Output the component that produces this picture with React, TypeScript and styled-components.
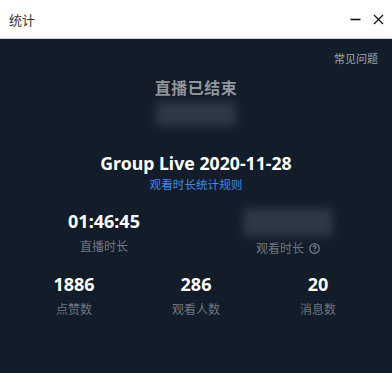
import React from "react";
import styled, { createGlobalStyle } from "styled-components";

const GlobalStyle = createGlobalStyle`
  html, body {
    margin: 0;
    padding: 0;
    width: 392px;
    height: 373px;
    overflow: hidden;
    font-family: "Noto Sans", "Noto Sans CJK SC", sans-serif;
  }
`;

type StatType = { value: string; label: string };

const bottomStats: StatType[] = [
  { value: "1886", label: "点赞数" },
  { value: "286", label: "观看人数" },
  { value: "20", label: "消息数" },
];

export default function App() {
  return (
    <S.Window>
      <GlobalStyle />
      <S.TitleBar>
        <S.Title>统计</S.Title>
        <S.WindowButtons>
          <S.WinButton aria-label="minimize">
            <svg width="11" height="11" viewBox="0 0 11 11">
              <path d="M0.5 5.5h10" stroke="#111" strokeWidth="1.6" />
            </svg>
          </S.WinButton>
          <S.WinButton aria-label="close">
            <svg width="11" height="11" viewBox="0 0 11 11">
              <path d="M1 1l9 9M10 1l-9 9" stroke="#111" strokeWidth="1.3" />
            </svg>
          </S.WinButton>
        </S.WindowButtons>
      </S.TitleBar>
      <S.Body>
        <S.HelpRow>
          <S.HelpLink>常见问题</S.HelpLink>
        </S.HelpRow>
        <S.EndedTitle>直播已结束</S.EndedTitle>
        <S.Blur width={80} height={24} offset={3} />
        <S.LiveName>Group Live 2020-11-28</S.LiveName>
        <S.RuleLink>观看时长统计规则</S.RuleLink>
        <S.TopStats>
          <S.Stat>
            <S.StatValue>01:46:45</S.StatValue>
            <S.StatLabel>直播时长</S.StatLabel>
          </S.Stat>
          <S.Stat>
            <S.Blur width={90} height={28} offset={0} />
            <S.StatLabel>
              观看时长
              <S.InfoIcon width="11" height="11" viewBox="0 0 12 12">
                <circle cx="6" cy="6" r="5.2" fill="none" stroke="#8c939b" strokeWidth="1.1" />
                <path
                  d="M4.4 4.7c0-1 .7-1.6 1.6-1.6s1.6.6 1.6 1.4c0 .9-1.1 1.1-1.4 1.8v.6"
                  fill="none"
                  stroke="#8c939b"
                  strokeWidth="1.1"
                />
                <circle cx="6.2" cy="8.7" r="0.7" fill="#8c939b" />
              </S.InfoIcon>
            </S.StatLabel>
          </S.Stat>
        </S.TopStats>
        <S.BottomStats>
          {bottomStats.map((stat) => (
            <S.Stat key={stat.label}>
              <S.StatValue>{stat.value}</S.StatValue>
              <S.StatLabel>{stat.label}</S.StatLabel>
            </S.Stat>
          ))}
        </S.BottomStats>
      </S.Body>
    </S.Window>
  );
}

const S = {
  Window: styled.div`
    width: 392px;
    height: 373px;
    display: flex;
    flex-direction: column;
    background-color: #131c29;
  `,
  TitleBar: styled.div`
    height: 38px;
    flex-shrink: 0;
    display: flex;
    align-items: center;
    justify-content: space-between;
    padding: 0 8px 0 9px;
    background-color: #ffffff;
    border-bottom: 1px solid #cfd3d6;
  `,
  Title: styled.span`
    font-size: 13px;
    color: #333333;
    font-family: "Noto Sans CJK SC", sans-serif;
  `,
  WindowButtons: styled.div`
    display: flex;
    align-items: center;
    gap: 12px;
  `,
  WinButton: styled.div`
    width: 11px;
    height: 11px;
    display: flex;
  `,
  Body: styled.div`
    flex: 1;
    display: flex;
    flex-direction: column;
    align-items: center;
    font-family: "Noto Sans", "Noto Sans CJK SC", sans-serif;
  `,
  HelpRow: styled.div`
    align-self: stretch;
    display: flex;
    justify-content: flex-end;
    padding: 12px 14px 0 0;
    height: 16px;
  `,
  HelpLink: styled.span`
    font-size: 11px;
    line-height: 16px;
    color: #a1a7ad;
  `,
  EndedTitle: styled.div`
    margin-top: 10px;
    font-size: 16px;
    line-height: 22px;
    font-weight: 700;
    color: #8f969d;
    letter-spacing: 0.5px;
  `,
  Blur: styled.div<{ width: number; height: number; offset: number }>`
    width: ${({ width }) => width}px;
    height: ${({ height }) => height}px;
    margin-top: ${({ offset }) => offset}px;
    background-color: #2e3844;
    filter: blur(4px);
  `,
  LiveName: styled.div`
    margin-top: 25px;
    font-size: 17.7px;
    line-height: 24px;
    font-weight: 700;
    color: #ffffff;
  `,
  RuleLink: styled.div`
    margin-top: 2px;
    font-size: 11.6px;
    line-height: 16px;
    color: #3d8bf0;
  `,
  TopStats: styled.div`
    align-self: stretch;
    display: grid;
    grid-template-columns: 1fr 1fr;
    padding: 0 12px;
    margin-top: 15px;
  `,
  BottomStats: styled.div`
    align-self: stretch;
    display: grid;
    grid-template-columns: 1fr 1fr 1fr;
    padding: 0 13px;
    margin-top: 13px;
  `,
  Stat: styled.div`
    display: flex;
    flex-direction: column;
    align-items: center;
    gap: 2px;
  `,
  StatValue: styled.div`
    font-size: 18px;
    line-height: 26px;
    font-weight: 700;
    color: #ffffff;
  `,
  StatLabel: styled.div`
    display: flex;
    align-items: center;
    gap: 5px;
    font-size: 12px;
    line-height: 20px;
    color: #6f7780;
    font-family: "Noto Sans CJK SC", sans-serif;
  `,
  InfoIcon: styled.svg`
    display: block;
  `,
};
